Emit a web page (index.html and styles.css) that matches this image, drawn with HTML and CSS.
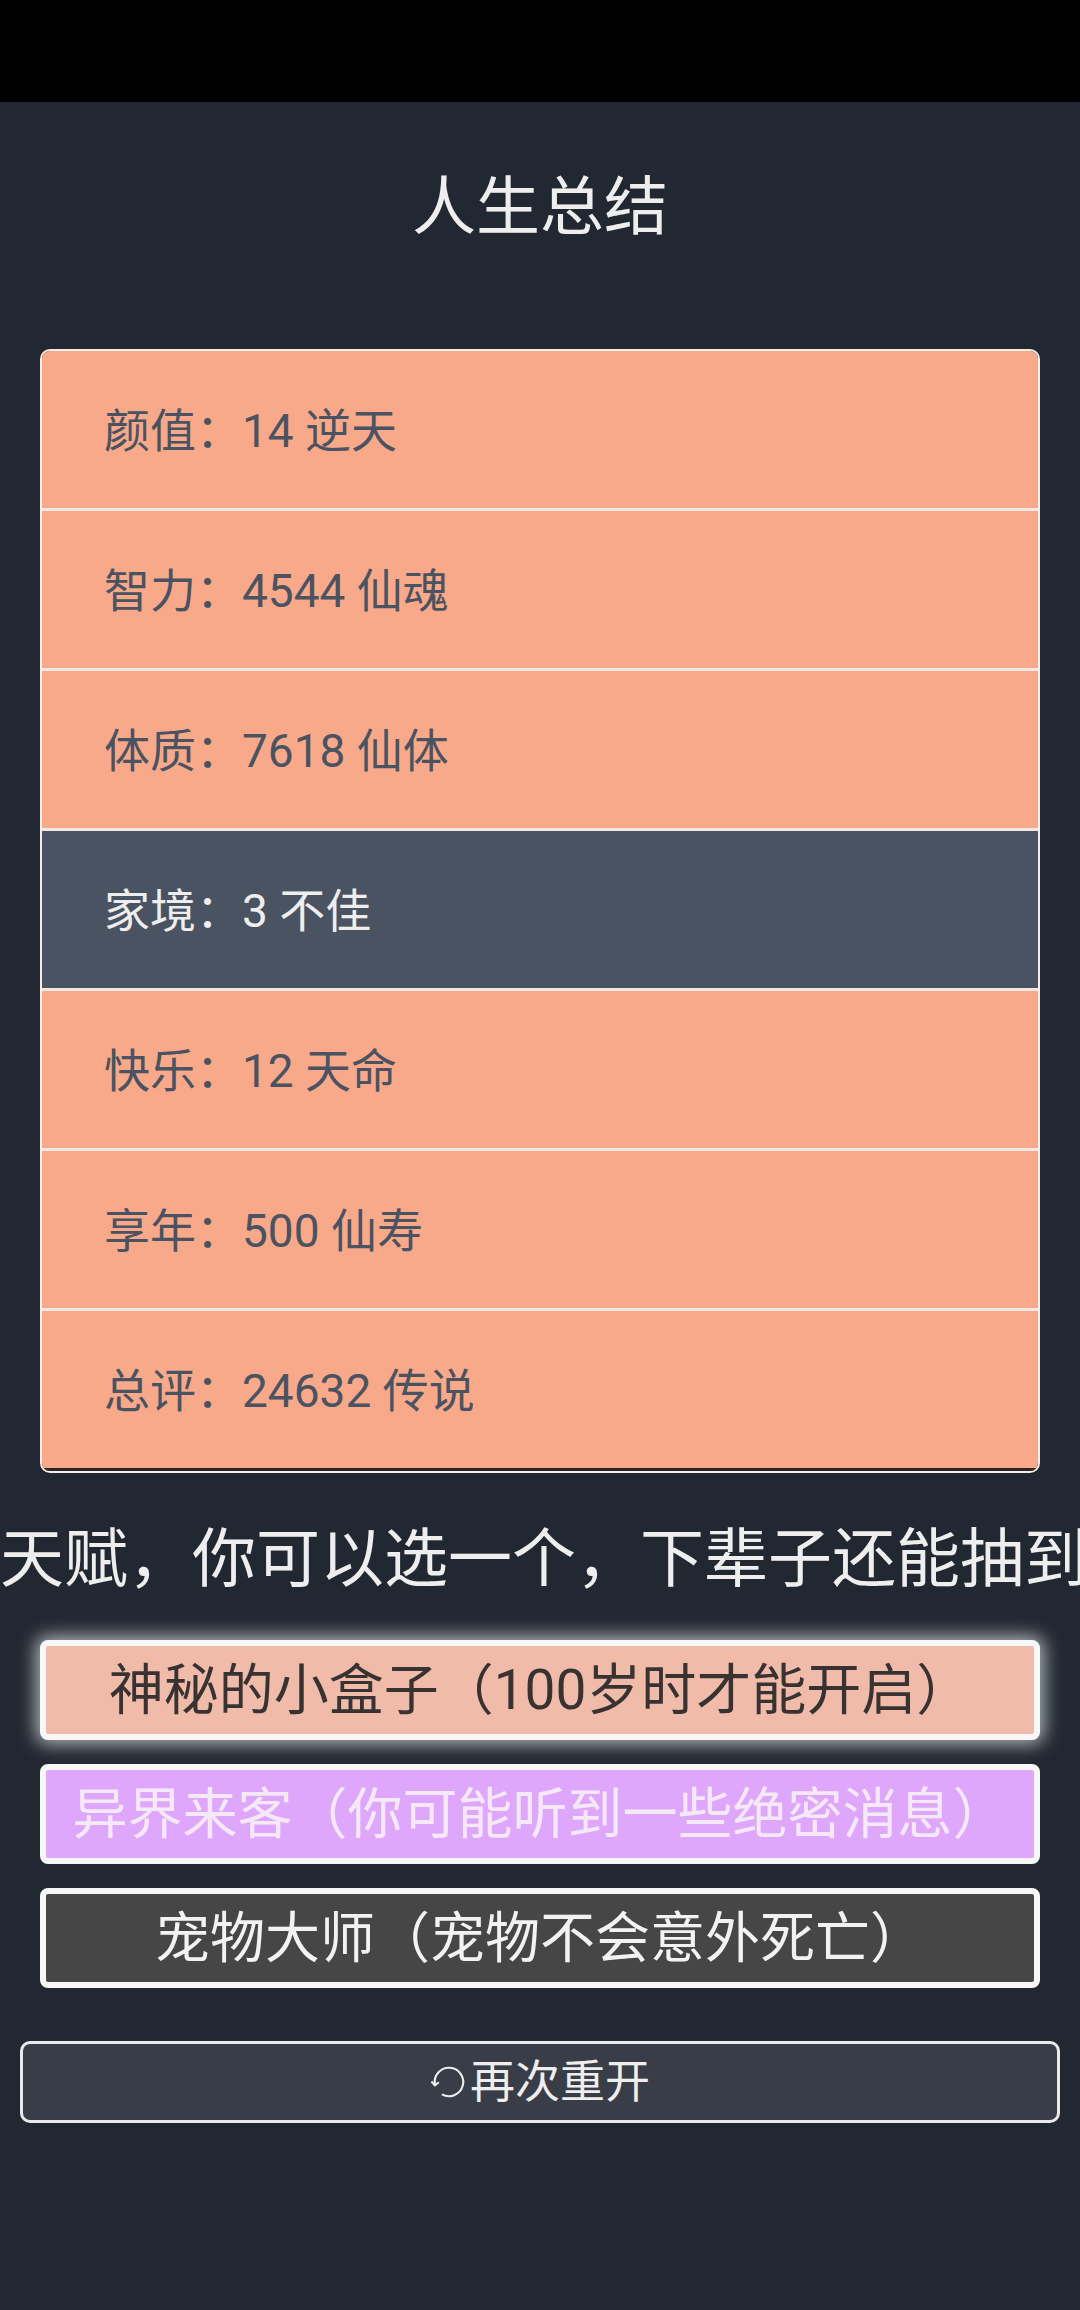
FILE: index.html
```html
<!DOCTYPE html>
<html lang="zh-CN">
<head>
    <meta charset="UTF-8">
    <title>人生总结</title>
    <meta name="viewport" content="width=device-width">
    <link rel="stylesheet" href="styles.css">
</head>
<body>
    <div class="status-bar"></div>

    <h1 class="head">人生总结</h1>

    <ul class="summary">
        <li>颜值：14 逆天</li>
        <li>智力：4544 仙魂</li>
        <li>体质：7618 仙体</li>
        <li class="bad">家境：3 不佳</li>
        <li>快乐：12 天命</li>
        <li>享年：500 仙寿</li>
        <li>总评：24632 传说</li>
    </ul>

    <div class="head talent-head">天赋，你可以选一个，下辈子还能抽到</div>

    <ul class="talents">
        <li class="talent grade1 selected">神秘的小盒子（100岁时才能开启）</li>
        <li class="talent grade2">异界来客（你可能听到一些绝密消息）</li>
        <li class="talent grade0">宠物大师（宠物不会意外死亡）</li>
    </ul>

    <button class="restart">
        <svg class="restart-icon" viewBox="0 0 40 40" width="38" height="38">
            <path d="M12.5 33 A15 15 0 1 0 5.2 22.6" fill="none" stroke="#eeeeee" stroke-width="2.2"/>
            <path d="M1.5 19.5 L5.2 23.6 L9.3 20.2" fill="none" stroke="#eeeeee" stroke-width="2.2"/>
        </svg>再次重开
    </button>
</body>
</html>
```

FILE: styles.css
```css
*,
*::after,
*::before{
    padding: 0;
    margin: 0;
    box-sizing: border-box;
}
html{
    font: normal 46px/1.5 Roboto, "Noto Sans CJK SC", sans-serif;
}
body{
    background-color: #222831;
    color: #eeeeee;
    min-height: 2310px;
    overflow-x: hidden;
}
.status-bar{
    height: 102px;
    background-color: #000000;
}
.head{
    font-size: 64px;
    font-weight: normal;
    line-height: 96px;
    text-align: center;
    white-space: nowrap;
}
h1.head{
    margin: 58px 0 93px;
}
.summary{
    list-style: none;
    margin: 0 40px;
    border: 2px solid #f6ece8;
    border-radius: 10px;
    overflow: hidden;
}
.summary li{
    height: 160px;
    display: flex;
    align-items: center;
    padding: 4px 0 0 62px;
    background-color: #f7a98a;
    color: #4b5261;
    border-bottom: 3px solid #f3e9e4;
}
.summary li.bad{
    background-color: #4a5361;
    color: #eeeeee;
}
.summary li:last-child{
    border-bottom-color: #2b2326;
}
.talent-head{
    margin-top: 39px;
}
.talents{
    list-style: none;
    margin: 32px 40px 0;
    display: flex;
    flex-direction: column;
    gap: 24px;
}
.talent{
    height: 100px;
    border: 6px solid #f7f7f7;
    border-radius: 8px;
    font-size: 55px;
    line-height: 1;
    display: flex;
    align-items: center;
    justify-content: center;
    white-space: nowrap;
}
.talent.selected{
    box-shadow: 0 0 18px 4px rgba(225, 232, 235, 0.75);
}
.grade1{
    background-color: #f0bca9;
    color: #383232;
}
.grade2{
    background-color: #dfa7fb;
    color: #f5e9f7;
}
.grade0{
    background-color: #464646;
    color: #f2f2f2;
}
.restart{
    display: flex;
    align-items: center;
    justify-content: center;
    width: 1040px;
    height: 82px;
    margin: 53px 20px 0;
    border: 3px solid #eaeaec;
    border-radius: 10px;
    background-color: #393d47;
    color: #eeeeee;
    font: normal 45px/1 Roboto, "Noto Sans CJK SC", sans-serif;
}
.restart-icon{
    margin-right: 2px;
}
```
